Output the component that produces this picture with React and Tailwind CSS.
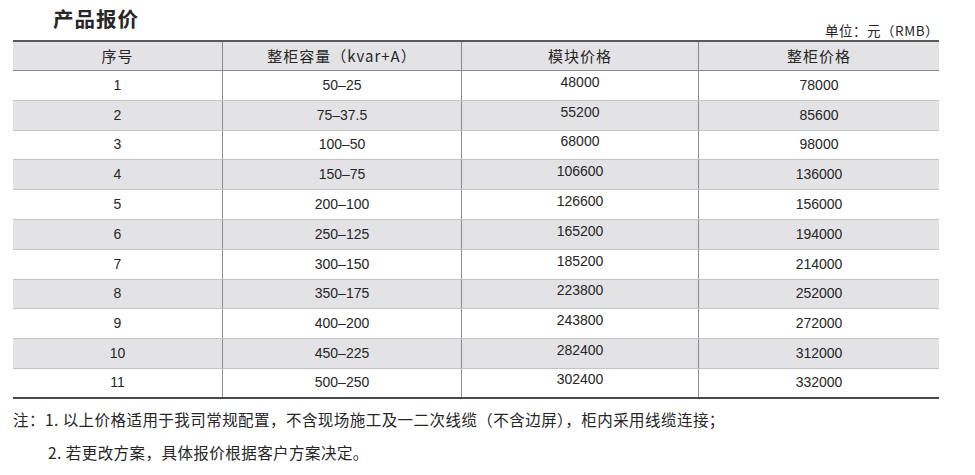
import React from 'react';

const rows = [
  ['1', '50–25', '48000', '78000'],
  ['2', '75–37.5', '55200', '85600'],
  ['3', '100–50', '68000', '98000'],
  ['4', '150–75', '106600', '136000'],
  ['5', '200–100', '126600', '156000'],
  ['6', '250–125', '165200', '194000'],
  ['7', '300–150', '185200', '214000'],
  ['8', '350–175', '223800', '252000'],
  ['9', '400–200', '243800', '272000'],
  ['10', '450–225', '282400', '312000'],
  ['11', '500–250', '302400', '332000'],
];

const font = { fontFamily: '"Liberation Sans", "Noto Sans CJK SC", sans-serif' };
const cjk = { fontFamily: '"Noto Sans CJK SC", sans-serif' };

function App() {
  return (
    <div className="w-[975px] h-[475px] bg-white text-[#262626] overflow-hidden relative" style={font}>
      {/* title + unit */}
      <div className="flex items-end justify-between pl-[53px] pr-[36px] pt-[4px] h-[40px]">
        <div className="text-[20.5px] font-bold leading-none mb-[12px] tracking-[1px]" style={cjk}>产品报价</div>
        <div className="text-[13.5px] leading-none mb-[3px] tracking-[0.5px]" style={cjk}>单位：元（RMB）</div>
      </div>

      {/* table */}
      <div className="ml-[13px] w-[926px] border-t-2 border-[#5a5a5a]">
        <div className="grid grid-cols-[210px_239px_237px_240px] h-[29px] bg-[#e3e3e5] border-b border-[#8a8a8a] text-[15px] tracking-[1px]" style={cjk}>
          <div className="flex items-center justify-center border-r border-[#8a8a8a]">序号</div>
          <div className="flex items-center justify-center border-r border-[#8a8a8a]">整柜容量（kvar+A）</div>
          <div className="flex items-center justify-center border-r border-[#8a8a8a]">模块价格</div>
          <div className="flex items-center justify-center">整柜价格</div>
        </div>
        {rows.map((r, i) => (
          <div
            key={r[0]}
            className={
              'grid grid-cols-[210px_239px_237px_240px] h-[29.8px] text-[14px] ' +
              (i % 2 === 1 ? 'bg-[#e3e3e5] ' : 'bg-white ') +
              (i === rows.length - 1 ? 'border-b-2 border-[#4a4a4a]' : 'border-b border-[#c4c4c6]')
            }
          >
            <div className="flex items-center justify-center border-r border-[#8a8a8a]">{r[0]}</div>
            <div className="flex items-center justify-center border-r border-[#8a8a8a]">{r[1]}</div>
            <div className="flex items-center justify-center border-r border-[#8a8a8a] pb-[6px]">{r[2]}</div>
            <div className="flex items-center justify-center">{r[3]}</div>
          </div>
        ))}
      </div>

      {/* notes */}
      <div className="ml-[13px] mt-[4px] text-[15.5px] leading-[33px] tracking-[0.45px]" style={cjk}>
        <div>注：1. 以上价格适用于我司常规配置，不含现场施工及一二次线缆（不含边屏），柜内采用线缆连接；</div>
        <div className="pl-[35px]">2. 若更改方案，具体报价根据客户方案决定。</div>
      </div>
    </div>
  );
}

export default App;
